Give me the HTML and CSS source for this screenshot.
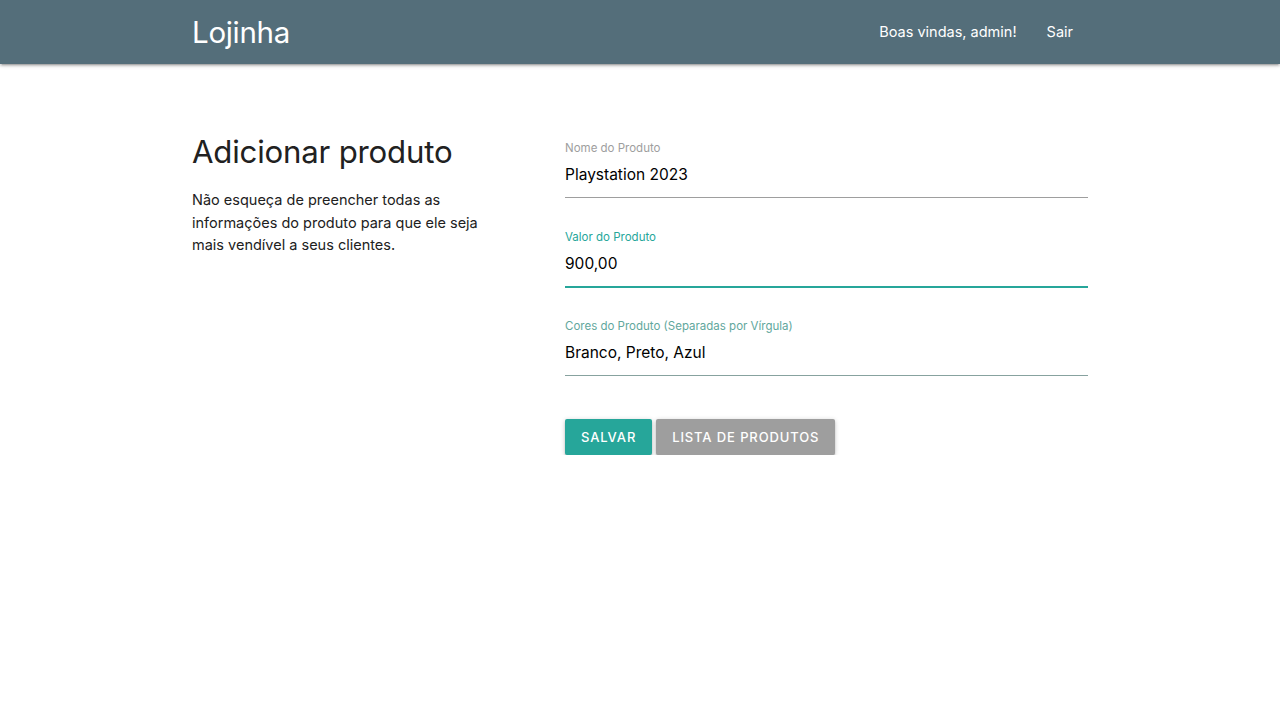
FILE: index.html
```html
<!DOCTYPE html>
<html lang="pt-BR">
<head>
<meta charset="utf-8">
<title>Lojinha</title>
<link rel="stylesheet" href="styles.css">
</head>
<body>
<nav class="navbar">
  <div class="container nav-inner">
    <a class="brand" href="#">Lojinha</a>
    <ul class="nav-links">
      <li><a href="#">Boas vindas, admin!</a></li>
      <li><a href="#">Sair</a></li>
    </ul>
  </div>
</nav>
<main class="container content">
  <section class="intro">
    <h1 class="title">Adicionar produto</h1>
    <p class="desc">Não esqueça de preencher todas as informações do produto para que ele seja mais vendível a seus clientes.</p>
  </section>
  <form class="form">
    <div class="field">
      <label class="label">Nome do Produto</label>
      <div class="input">Playstation 2023</div>
    </div>
    <div class="field focused">
      <label class="label">Valor do Produto</label>
      <div class="input">900,00</div>
    </div>
    <div class="field fading">
      <label class="label">Cores do Produto (Separadas por Vírgula)</label>
      <div class="input">Branco, Preto, Azul</div>
    </div>
    <div class="actions">
      <button type="button" class="btn btn-primary">Salvar</button>
      <button type="button" class="btn btn-grey">Lista de Produtos</button>
    </div>
  </form>
</main>
</body>
</html>
```

FILE: styles.css
```css
* { box-sizing: border-box; }
html, body { margin: 0; padding: 0; }
body {
  font-family: Inter, "Noto Sans", "Liberation Sans", sans-serif;
  font-size: 15px;
  color: rgba(0,0,0,0.87);
  background: #fff;
}
a { text-decoration: none; color: inherit; }

.container { width: 896px; margin: 0 auto; }

.navbar {
  height: 64px;
  background: #546e7a;
  box-shadow: 0 2px 2px 0 rgba(0,0,0,0.14), 0 3px 1px -2px rgba(0,0,0,0.12), 0 1px 5px 0 rgba(0,0,0,0.2);
  color: #fff;
}
.nav-inner {
  height: 64px;
  display: flex;
  align-items: center;
  justify-content: space-between;
}
.brand {
  font-size: 29.5px;
  font-weight: 400;
  letter-spacing: -0.3px;
  line-height: 64px;
}
.nav-links {
  list-style: none;
  margin: 0;
  padding: 0;
  display: flex;
}
.nav-links a {
  display: block;
  padding: 0 15px;
  font-size: 14.5px;
  line-height: 64px;
}

.content {
  display: grid;
  grid-template-columns: 373px 523px;
  padding-top: 64px;
}
.title {
  font-size: 31.2px;
  font-weight: 400;
  line-height: 1.1;
  margin: 7px 0 0;
  letter-spacing: -0.2px;
  color: #212121;
}
.desc {
  margin: 20px 0 0;
  width: 300px;
  font-size: 14.5px;
  line-height: 22.5px;
  color: #212121;
}

.form { padding-top: 13px; }
.field {
  height: 89px;
}
.label {
  display: block;
  font-size: 11.5px;
  line-height: 14px;
  color: #9e9e9e;
}
.input {
  height: 43px;
  border-bottom: 1px solid #9e9e9e;
  font-size: 15.5px;
  line-height: 22px;
  padding-top: 9px;
  color: #000;
}
.focused .label { color: #26a69a; }
.focused .input {
  border-bottom-color: #26a69a;
  box-shadow: 0 1px 0 0 #26a69a;
}
.fading .label { color: #62a79d; }
.fading .input { border-bottom-color: #87a29f; }

.actions {
  display: flex;
  gap: 4px;
  padding-top: 11px;
}
.btn {
  height: 36px;
  border: none;
  border-radius: 2px;
  padding: 0 16px;
  font-family: inherit;
  font-size: 13px;
  font-weight: 500;
  letter-spacing: 0.88px;
  text-transform: uppercase;
  color: #fff;
  box-shadow: 0 2px 2px 0 rgba(0,0,0,0.14), 0 3px 1px -2px rgba(0,0,0,0.12), 0 1px 5px 0 rgba(0,0,0,0.2);
  cursor: pointer;
}
.btn-primary { background: #26a69a; }
.btn-grey { background: #9e9e9e; }
```
